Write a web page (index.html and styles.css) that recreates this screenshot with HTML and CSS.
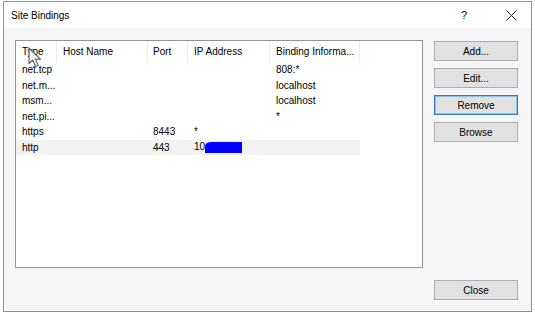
FILE: index.html
```html
<!DOCTYPE html>
<html lang="en">
<head>
  <meta charset="UTF-8">
  <title>Site Bindings</title>
  <link rel="stylesheet" href="styles.css">
</head>
<body>
  <!-- Dialog Window -->
  <div class="window">
    <!-- Title Bar -->
    <div class="title-bar">
      <span class="title">Site Bindings</span>
      <span class="help">?</span>
      <span class="close-x">
        <svg width="11" height="11" viewBox="0 0 11 11"><path d="M0.5 0.5 L10.5 10.5 M10.5 0.5 L0.5 10.5" stroke="#222" stroke-width="1" fill="none"/></svg>
      </span>
    </div>

    <!-- Dialog Body -->
    <div class="dialog-body">
      <div class="main-row">
        <!-- Bindings List -->
        <div class="list-box">
          <div class="row header">
            <div class="cell">Type</div>
            <div class="cell">Host Name</div>
            <div class="cell">Port</div>
            <div class="cell">IP Address</div>
            <div class="cell">Binding Informa...</div>
          </div>
          <div class="row">
            <div class="cell">net.tcp</div><div class="cell"></div><div class="cell"></div><div class="cell"></div><div class="cell">808:*</div>
          </div>
          <div class="row">
            <div class="cell">net.m...</div><div class="cell"></div><div class="cell"></div><div class="cell"></div><div class="cell">localhost</div>
          </div>
          <div class="row">
            <div class="cell">msm...</div><div class="cell"></div><div class="cell"></div><div class="cell"></div><div class="cell">localhost</div>
          </div>
          <div class="row">
            <div class="cell">net.pi...</div><div class="cell"></div><div class="cell"></div><div class="cell"></div><div class="cell">*</div>
          </div>
          <div class="row">
            <div class="cell">https</div><div class="cell"></div><div class="cell">8443</div><div class="cell">*</div><div class="cell"></div>
          </div>
          <div class="row selected">
            <div class="cell">http</div><div class="cell"></div><div class="cell">443</div><div class="cell">10<span class="redact"></span></div><div class="cell"></div>
          </div>

          <!-- Mouse pointer -->
          <svg class="cursor" width="15" height="21" viewBox="0 0 15 21">
            <path d="M1 1 L1 16.5 L4.8 13 L7.6 19.5 L10.2 18.3 L7.4 12.2 L12.5 12.2 Z" fill="#f4f4f4" fill-opacity="0.9" stroke="#6a6a6a" stroke-width="1.2" stroke-linejoin="round"/>
          </svg>
        </div>

        <!-- Action Buttons -->
        <div class="button-column">
          <button class="btn">Add...</button>
          <button class="btn">Edit...</button>
          <button class="btn default">Remove</button>
          <button class="btn">Browse</button>
        </div>
      </div>

      <div class="footer">
        <button class="btn">Close</button>
      </div>
    </div>
  </div>
</body>
</html>
```

FILE: styles.css
```css
/* General Reset */
body {
  font-family: "Liberation Sans", Arial, sans-serif;
  font-size: 10px;
  color: #000;
  margin: 0;
  padding: 0;
  background-color: #fff;
}

/* Dialog Window */
.window {
  margin: 1px 0 0 3px;
  width: 527px;
  height: 309px;
  border: 1px solid #6e98b4;
  background-color: #f5f5f8;
  display: flex;
  flex-direction: column;
}

/* Title Bar */
.title-bar {
  height: 26px;
  background-color: #fff;
  display: flex;
  align-items: center;
  padding-left: 7px;
}

.title {
  flex: 1;
  font-size: 10px;
}

.help {
  width: 20px;
  margin-right: 32px;
  text-align: center;
  font-size: 11px;
}

.close-x {
  width: 11px;
  height: 11px;
  margin-right: 14px;
  display: flex;
}

/* Dialog Body */
.dialog-body {
  flex: 1;
  padding: 12px 13px 11px 11px;
  display: flex;
  flex-direction: column;
}

.main-row {
  display: flex;
  gap: 11px;
}

/* Bindings List */
.list-box {
  position: relative;
  width: 406px;
  height: 226px;
  border: 1px solid #939393;
  background-color: #fff;
}

.row {
  display: grid;
  grid-template-columns: 41px 91px 40px 82px 90px;
  width: 344px;
  height: 15.5px;
  align-items: center;
}

.row.header {
  height: 21px;
  align-items: stretch;
}

.row.header .cell {
  border-right: 1px solid #ececec;
  display: flex;
  align-items: center;
  padding-bottom: 1px;
}

.row.selected {
  background-color: #f2f2f2;
}

.cell {
  padding-left: 6px;
  white-space: nowrap;
  overflow: hidden;
}

.row .cell:nth-child(3) {
  padding-left: 5px;
}

.redact {
  display: inline-block;
  vertical-align: middle;
  width: 37px;
  height: 11px;
  margin-left: 0;
  background-color: #0000ff;
  border-top-left-radius: 6px 4px;
}

/* Mouse pointer overlay */
.cursor {
  position: absolute;
  left: 12px;
  top: 6px;
}

/* Buttons */
.button-column {
  display: flex;
  flex-direction: column;
  gap: 7px;
  padding-top: 1px;
}

.btn {
  width: 84px;
  height: 20px;
  font-family: "Liberation Sans", Arial, sans-serif;
  font-size: 10px;
  color: #000;
  background-color: #e1e1e1;
  border: 1px solid #adadad;
  padding: 0;
}

.btn.default {
  border: 1px solid #2f7dc4;
  box-shadow: inset 0 0 0 1px #8cc0e8;
}

.footer {
  margin-top: auto;
  display: flex;
  justify-content: flex-end;
}
```
